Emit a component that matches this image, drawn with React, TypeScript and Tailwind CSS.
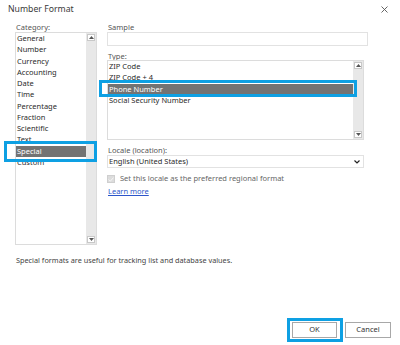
import { useState } from "react";

const categories = [
  "General",
  "Number",
  "Currency",
  "Accounting",
  "Date",
  "Time",
  "Percentage",
  "Fraction",
  "Scientific",
  "Text",
  "Special",
  "Custom",
];

const types = ["ZIP Code", "ZIP Code + 4", "Phone Number", "Social Security Number"];

function ScrollArrow({ down = false }: { down?: boolean }) {
  return (
    <div className="w-[8px] h-[7px] mx-auto bg-white border border-[#c8c8c8] flex items-center justify-center">
      <svg width="5" height="3" viewBox="0 0 5 3">
        {down ? <path d="M0 0 H5 L2.5 3 Z" fill="#555" /> : <path d="M0 3 H5 L2.5 0 Z" fill="#555" />}
      </svg>
    </div>
  );
}

function Scrollbar() {
  return (
    <div className="w-[10px] bg-[#e8e8e8] flex flex-col justify-between py-[1px]">
      <ScrollArrow />
      <ScrollArrow down />
    </div>
  );
}

export default function App() {
  const [category, setCategory] = useState("Special");
  const [type, setType] = useState("Phone Number");

  return (
    <div
      className="relative w-[400px] h-[345px] bg-white text-[7.5px] text-[#2a2a2a] overflow-hidden"
      style={{ fontFamily: '"Noto Sans", "Open Sans", sans-serif' }}
    >
      <div className="flex items-center justify-between h-[19px] pl-[8px] pr-[12px]">
        <span className="text-[8.7px] text-[#3a3a3a]">Number Format</span>
        <svg width="7" height="7" viewBox="0 0 7 7">
          <path d="M0.5 0.5 L6.5 6.5 M6.5 0.5 L0.5 6.5" stroke="#555" strokeWidth="0.9" />
        </svg>
      </div>

      <div className="flex pl-[15px] pt-[3px]">
        <div className="w-[82px] flex flex-col">
          <div className="h-[10px] leading-[10px] pl-[1px] text-[#555]">Category:</div>
          <div className="h-[213px] border border-[#dcdcdc] flex">
            <div className="flex-1 flex flex-col">
              {categories.map((c) => (
                <div
                  key={c}
                  onClick={() => setCategory(c)}
                  className={
                    "h-[11.25px] leading-[11.25px] pl-[1px] " +
                    (c === category ? "bg-[#737373] text-white" : "")
                  }
                >
                  {c}
                </div>
              ))}
            </div>
            <Scrollbar />
          </div>
        </div>

        <div className="ml-[10px] w-[261px] flex flex-col">
          <div className="h-[10px] leading-[10px] pl-[1px] text-[#555]">Sample</div>
          <div className="h-[14px] border border-[#e2e2e2]" />
          <div className="pt-[6px] leading-[8px] h-[14px] pl-[1px] text-[#555]">Type:</div>
          <div className="w-[257px] h-[80px] border border-[#dcdcdc] flex">
            <div className="flex-1 flex flex-col">
              {types.map((t) => (
                <div
                  key={t}
                  onClick={() => setType(t)}
                  className={
                    "h-[11.25px] leading-[11.25px] pl-[1px] " +
                    (t === type ? "bg-[#737373] text-white" : "")
                  }
                >
                  {t}
                </div>
              ))}
            </div>
            <Scrollbar />
          </div>
          <div className="pt-[5px] leading-[10px] h-[15px] pl-[1px] text-[#555]">Locale (location):</div>
          <div className="w-[257px] h-[13px] border border-[#e2e2e2] flex items-center justify-between pl-[1px] pr-[3px]">
            <span>English (United States)</span>
            <svg width="6" height="4" viewBox="0 0 6 4">
              <path d="M0.5 0.5 L3 3 L5.5 0.5" stroke="#222" strokeWidth="1.2" fill="none" />
            </svg>
          </div>
          <div className="mt-[6px] h-[10px] flex items-center gap-[5px]">
            <div className="w-[8px] h-[8px] bg-[#dcdcdc] border border-[#cfcfcf] flex items-center justify-center">
              <svg width="6" height="5" viewBox="0 0 6 5">
                <path d="M0.5 2.5 L2.3 4.2 L5.5 0.6" stroke="#f5f5f5" strokeWidth="1" fill="none" />
              </svg>
            </div>
            <span className="text-[#666]">Set this locale as the preferred regional format</span>
          </div>
          <div className="mt-[2px] h-[10px] leading-[10px] pl-[1px]">
            <span className="text-[#2c55c9] underline">Learn more</span>
          </div>
        </div>
      </div>

      <div className="mt-[10px] pl-[16px] leading-[10px] text-[7.3px] text-[#444]">
        Special formats are useful for tracking list and database values.
      </div>

      <div className="mt-[57px] flex justify-end gap-[8px] pr-[9px]">
        <button className="w-[45px] h-[16px] border border-[#a8a8a8] bg-white text-[7.5px] text-[#333]">OK</button>
        <button className="w-[46px] h-[16px] border border-[#a8a8a8] bg-white text-[7.5px] text-[#333]">
          Cancel
        </button>
      </div>

      <div className="absolute left-[4px] top-[141px] w-[93px] h-[21px] border-[3px] border-[#0ea0e3]" />
      <div className="absolute left-[99px] top-[80px] w-[258px] h-[17px] border-[3px] border-[#0ea0e3]" />
      <div className="absolute left-[287px] top-[318px] w-[56px] h-[24px] border-[3px] border-[#0ea0e3]" />
    </div>
  );
}
